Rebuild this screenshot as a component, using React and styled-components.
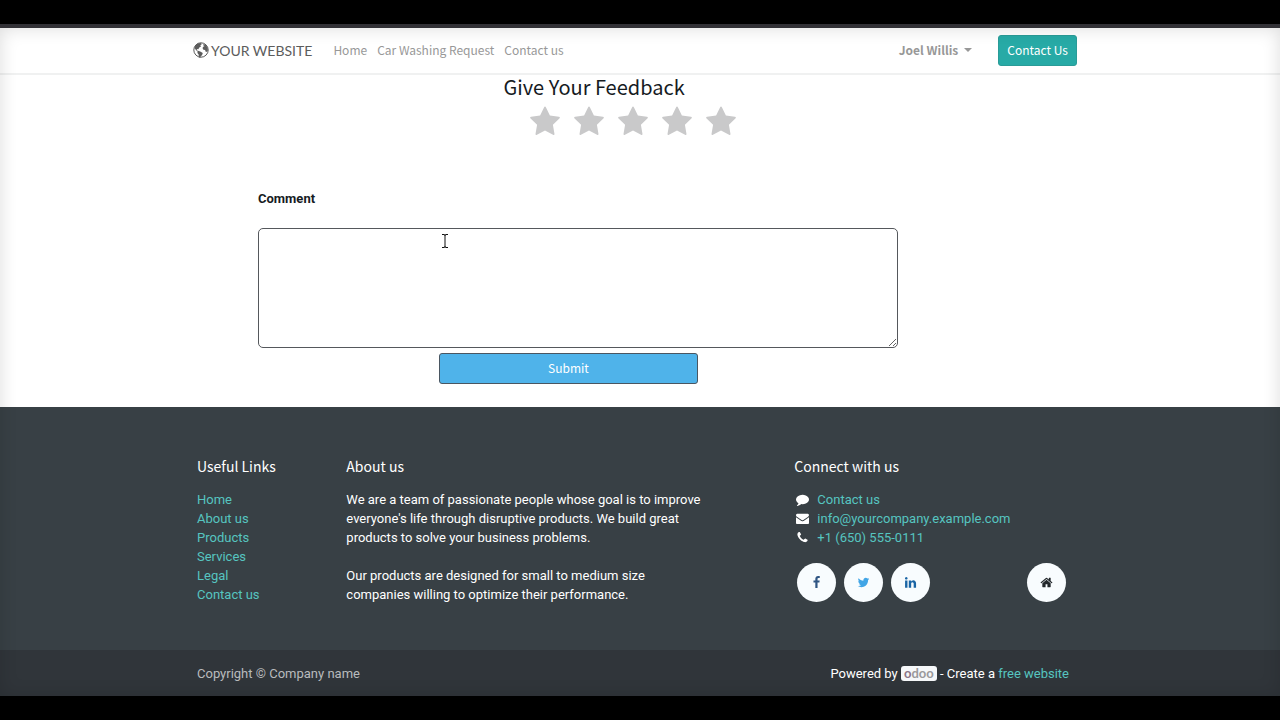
import React from "react";
import styled, { createGlobalStyle, css } from "styled-components";

const COLORS = {
  teal: "#27aaa6",
  link: "#56c5c0",
  slate: "#384045",
  slateDark: "#30353a",
  sky: "#4fb3ea",
  ink: "#161b1f",
  muted: "#989898",
};

const FONTS = {
  body: `Roboto, "Liberation Sans", sans-serif`,
  heading: `"Noto Sans CJK SC", "Open Sans", sans-serif`,
  logo: `Lato, "Open Sans", sans-serif`,
};

const ICONS = {
  star: "M1728 647q0 22-26 48l-363 354 86 500q1 7 1 20 0 21-10.5 35.5t-30.5 14.5q-19 0-40-12l-449-236-449 236q-22 12-40 12-21 0-31.5-14.5t-10.5-35.5q0-6 2-20l86-500-364-354q-25-27-25-48 0-37 56-46l502-73 225-455q19-41 49-41t49 41l225 455 502 73q56 9 56 46z",
  facebook:
    "M1343 12v264h-157q-86 0-116 36t-30 108v189h293l-39 296h-254v759h-306v-759h-255v-296h255v-218q0-186 104-288.5t277-102.5q147 0 228 12z",
  twitter:
    "M1684 408q-67 98-162 167 1 14 1 42 0 130-38 259.5t-115.5 248.5-184.5 210.5-258 146-323 54.5q-271 0-496-145 35 4 78 4 225 0 401-138-105-2-188-64.5t-114-159.5q33 5 61 5 43 0 85-11-112-23-185.5-111.5t-73.5-205.5v-4q68 38 146 41-66-44-105-115t-39-154q0-88 44-163 121 149 294.5 238.5t371.5 99.5q-8-38-8-74 0-134 94.5-228.5t228.5-94.5q140 0 236 102 109-21 205-78-37 115-142 178 93-10 186-50z",
  linkedin:
    "M477 625v991h-330v-991h330zm21-306q1 73-50.5 122t-135.5 49h-2q-82 0-132-49t-50-122q0-74 51.5-122.5t134.5-48.5 133 48.5 51 122.5zm1166 729v568h-329v-530q0-105-40.5-164.5t-126.5-59.5q-63 0-105.5 34.5t-63.5 85.5q-11 30-11 81v553h-329q2-399 2-647t-1-296l-1-48h329v144h-2q20-32 41-56t56.5-52 87-43.5 114.5-15.5q171 0 275 113.5t104 332.5z",
  home: "M1472 992v480q0 26-19 45t-45 19h-384v-384h-256v384h-384q-26 0-45-19t-19-45v-480q0-1 .5-3t.5-3l575-474 575 474q1 2 1 6zm223-69l-62 74q-8 9-21 11h-3q-13 0-21-7l-692-577-692 577q-12 8-24 7-13-2-21-11l-62-74q-8-10-7-23.5t11-21.5l719-599q32-26 76-26t76 26l244 204v-195q0-14 9-23t23-9h192q14 0 23 9t9 23v408l219 182q10 8 11 21.5t-7 23.5z",
  comment:
    "M1792 896q0 174-120 321.5t-326 233-450 85.5q-70 0-145-8-198 175-460 242-49 14-114 22-17 2-30.5-9t-17.5-29v-1q-3-4-.5-12t2-10 4.5-9.5l6-9 7-8.5 8-9q7-8 31-34.5t34.5-38 31-39.5 32.5-51 27-59 26-76q-157-89-247.5-220t-90.5-281q0-130 71-248.5t191-204.5 286-136.5 348-50.5q244 0 450 85.5t326 233 120 321.5z",
  envelope:
    "M1792 710v794q0 66-47 113t-113 47h-1472q-66 0-113-47t-47-113v-794q44 49 101 87 362 246 497 345 57 42 92.5 65.5t94.5 48 110 24.5h2q51 0 110-24.5t94.5-48 92.5-65.5q170-123 498-345 57-39 100-87zm0-294q0 79-49 151t-122 123q-376 261-468 325-10 7-42.5 31t-54 38.8-52 33.2-57.5 27-50 9h-2q-23 0-50-9t-57.5-27-52-33.2-54-38.8-42.5-31q-91-64-262-182.5t-205-142.5q-62-42-117-115.5t-55-136.5q0-78 41.5-130t118.5-52h1472q65 0 112.5 47t47.5 113z",
  phone:
    "M1600 1240q0 27-10 70.5t-21 68.5q-21 50-122 106-94 51-186 51-27 0-53-3.5t-57.5-12.5-47-14.5-55.5-20.5-49-18q-98-35-175-83-127-79-264-216t-216-264q-48-77-83-175-3-9-18-49t-20.5-55.5-14.5-47-12.5-57.5-3.5-53q0-92 51-186 56-101 106-122 25-11 68.5-21t70.5-10q14 0 21 3 18 6 53 76 11 19 30 54t35 63.5 31 53.5q3 4 17.5 25t21.5 35.5 7 28.5q0 20-28.5 50t-62 55-62 53-28.5 46q0 9 5 22.5t8.5 20.5 14 24 11.5 19q76 137 174 235t235 174q2 1 19 11.5t24 14 20.5 8.5 22.5 5q18 0 46-28.5t53-62 55-62 50-28.5q14 0 28.5 7t35.5 21.5 25 17.5q25 15 53.5 31t63.5 35 54 30q70 35 76 53 3 7 3 21z",
};

const USEFUL_LINKS = [
  "Home",
  "About us",
  "Products",
  "Services",
  "Legal",
  "Contact us",
];

const CONTACTS = [
  { icon: "comment", label: "Contact us" },
  { icon: "envelope", label: "info@yourcompany.example.com" },
  { icon: "phone", label: "+1 (650) 555-0111" },
];

const SOCIALS = [
  { icon: "facebook", label: "Facebook", color: "#2f5583" },
  { icon: "twitter", label: "Twitter", color: "#41a5e6" },
  { icon: "linkedin", label: "LinkedIn", color: "#1a65a5" },
];

const Glyph = ({ name, size }) => (
  <svg width={size} height={size} viewBox="0 0 1792 1792" aria-hidden="true">
    <path d={ICONS[name]} fill="currentColor" />
  </svg>
);

const Globe = () => (
  <svg width="16" height="16" viewBox="0 0 16 16" aria-hidden="true">
    <circle cx="8" cy="8" r="7.2" fill="none" stroke="currentColor" />
    <path
      d="M2.200 4 4.600 1.600 8 1l.8 1.200-1.600 1 1 1-1.900 1.400-1 1.700-1.500-.3.3 1.500 1.600.6 1.500.5 2.600 1.400-.7 2-1.500 1.600-.4 1.300-1.400-.6-.2-2.900-1.200-1.500.2-1.300L2.900 8 1.500 6z"
      fill="currentColor"
    />
    <path
      d="M10.400 2 12.600 2.800 14.600 5.600l.3 3-1.300 1.500-1.100-.6-.4-1.600-1.700-.2-.9-1.600 1-1.500 1.200-.6-1.400-.5z"
      fill="currentColor"
    />
  </svg>
);

const SiteHeader = () => (
  <Header>
    <HeaderInner>
      <Logo href="#">
        <Globe />
        YOUR WEBSITE
      </Logo>
      <Nav>
        <NavLink href="#">Home</NavLink>
        <NavLink href="#">Car Washing Request</NavLink>
        <NavLink href="#">Contact us</NavLink>
      </Nav>
      <UserMenu type="button" aria-haspopup="true">
        Joel Willis
        <Caret />
      </UserMenu>
      <ContactButton type="button">Contact Us</ContactButton>
    </HeaderInner>
  </Header>
);

const FeedbackForm = () => (
  <Form onSubmit={(event) => event.preventDefault()}>
    <Rating>
      <RatingTitle>Give Your Feedback</RatingTitle>
      <Stars>
        {[1, 2, 3, 4, 5].map((value) => (
          <Star key={value}>
            <input
              type="radio"
              name="rating"
              value={value}
              aria-label={`${value} stars`}
            />
            <Glyph name="star" size={32} />
          </Star>
        ))}
      </Stars>
    </Rating>
    <CommentField>
      <CommentLabel htmlFor="comment">Comment</CommentLabel>
      <CommentBox>
        <Textarea id="comment" />
        <Pointer width="8" height="16" viewBox="0 0 8 16" aria-hidden="true">
          <path
            d="M1 1.500h2q1 0 1 1 0-1 1-1h2M4 2v12M1 14.500h2q1 0 1-1 0 1 1 1h2"
            fill="none"
            stroke="#111"
          />
        </Pointer>
      </CommentBox>
      <Submit type="submit">Submit</Submit>
    </CommentField>
  </Form>
);

const SiteFooter = () => (
  <Footer>
    <FooterGrid>
      <Column $span={2}>
        <ColumnTitle>Useful Links</ColumnTitle>
        <List>
          {USEFUL_LINKS.map((label) => (
            <li key={label}>
              <Link href="#">{label}</Link>
            </li>
          ))}
        </List>
      </Column>
      <Column $span={5}>
        <ColumnTitle>About us</ColumnTitle>
        <Paragraph>
          We are a team of passionate people whose goal is to improve everyone's
          life through disruptive products. We build great products to solve
          your business problems.
        </Paragraph>
        <Paragraph>
          Our products are designed for small to medium size companies willing
          to optimize their performance.
        </Paragraph>
      </Column>
      <Column $start={9} $span={4}>
        <ColumnTitle>Connect with us</ColumnTitle>
        <List>
          {CONTACTS.map(({ icon, label }) => (
            <Contact key={label}>
              <Glyph name={icon} size={13} />
              <Link href="#">{label}</Link>
            </Contact>
          ))}
        </List>
        <Socials>
          {SOCIALS.map(({ icon, label, color }) => (
            <Round key={label} href="#" aria-label={label} $color={color}>
              <Glyph name={icon} size={13} />
            </Round>
          ))}
          <Round href="#" aria-label="Home page" $color="#22272b" $end>
            <Glyph name="home" size={13} />
          </Round>
        </Socials>
      </Column>
    </FooterGrid>
  </Footer>
);

const BottomBar = () => (
  <Bottom>
    <BottomInner>
      <Copyright>Copyright © Company name</Copyright>
      <span>
        Powered by{" "}
        <Badge>
          <i>o</i>doo
        </Badge>{" "}
        - Create a <Link href="#">free website</Link>
      </span>
    </BottomInner>
  </Bottom>
);

const App = () => (
  <>
    <GlobalStyle />
    <Page>
      <SiteHeader />
      <FeedbackForm />
      <SiteFooter />
      <BottomBar />
    </Page>
  </>
);

const GlobalStyle = createGlobalStyle`
  *,
  *::before,
  *::after {
    box-sizing: border-box;
  }

  body {
    margin: 0;
    padding: 24px 0;
    background: #000;
    color: ${COLORS.ink};
    font-family: ${FONTS.body};
    font-size: 13px;
    line-height: 19px;
  }
`;

const Page = styled.div`
  position: relative;
  border-top: 4px solid #323136;
  background: #fff;

  &::after {
    content: "";
    position: absolute;
    inset: 0;
    box-shadow: inset 0 0 18px rgba(0, 0, 0, 0.14);
    pointer-events: none;
  }
`;

const container = css`
  width: 100%;
  max-width: 896px;
  margin: 0 auto;
`;

const buttonBase = css`
  height: 31px;
  padding: 0 8px 2px;
  border-radius: 3px;
  color: #fff;
  font-family: ${FONTS.heading};
  font-size: 12px;
`;

const Header = styled.header`
  padding-right: 10px;
  border-bottom: 2px solid #f0f1f1;
`;

const HeaderInner = styled.div`
  ${container}
  max-width: 884px;
  height: 45px;
  display: flex;
  align-items: center;
`;

const Logo = styled.a`
  display: flex;
  align-items: center;
  gap: 2px;
  margin-right: 16px;
  padding-bottom: 1px;
  color: #5c5c5c;
  font-family: ${FONTS.logo};
  font-size: 14px;
  text-decoration: none;
`;

const Nav = styled.nav`
  display: flex;
  padding-bottom: 2px;
`;

const NavLink = styled.a`
  padding: 0 5px;
  color: ${COLORS.muted};
  font-family: ${FONTS.heading};
  font-size: 12px;
  text-decoration: none;
`;

const UserMenu = styled.button`
  display: flex;
  align-items: center;
  gap: 6px;
  margin: 0 26px 0 auto;
  padding: 0 0 2px;
  border: 0;
  background: none;
  color: ${COLORS.muted};
  font-family: ${FONTS.heading};
  font-size: 12px;
  font-weight: 700;
`;

const Caret = styled.span`
  border: 4px solid transparent;
  border-top-color: currentColor;
  border-bottom: 0;
`;

const ContactButton = styled.button`
  ${buttonBase}
  border: 1px solid #2a9c98;
  background: ${COLORS.teal};
`;

const Form = styled.form`
  padding: 0 14px 23px 0;
`;

const Rating = styled.fieldset`
  width: 259px;
  margin: 0 auto;
  padding: 0;
  border: 0;
`;

const RatingTitle = styled.legend`
  padding: 0;
  font-family: ${FONTS.heading};
  font-size: 20px;
  line-height: 24px;
`;

const Stars = styled.div`
  display: flex;
  justify-content: center;
  gap: 12px;
  padding-top: 7px;
`;

const Star = styled.label`
  display: flex;
  color: #c9c9ca;

  input {
    position: absolute;
    opacity: 0;
  }
`;

const CommentField = styled.div`
  ${container}
  padding: 51px 0 0 73px;
`;

const CommentLabel = styled.label`
  display: block;
  font-weight: 700;
`;

const CommentBox = styled.div`
  position: relative;
  max-width: 640px;
  margin-top: 20px;
`;

const Textarea = styled.textarea`
  display: block;
  width: 100%;
  height: 120px;
  padding: 6px 10px;
  border: 1px solid #55585c;
  border-radius: 5px;
  background: #fff;
  font: inherit;
  resize: vertical;
`;

// text cursor resting over the comment box
const Pointer = styled.svg`
  position: absolute;
  left: 183px;
  top: 5px;
  pointer-events: none;
`;

const Submit = styled.button`
  ${buttonBase}
  display: block;
  width: 259px;
  margin: 5px 0 0 181px;
  border: 1px solid #4a5661;
  background: ${COLORS.sky};
`;

const Footer = styled.footer`
  padding: 47px 14px 27px 0;
  background: ${COLORS.slate};
  color: #fff;
`;

const FooterGrid = styled.div`
  ${container}
  display: grid;
  grid-template-columns: repeat(12, 1fr);
`;

const Column = styled.section`
  grid-column: ${({ $start = "auto", $span }) => `${$start} / span ${$span}`};
  padding-left: 12px;
`;

const ColumnTitle = styled.h2`
  margin: 0 0 11px;
  font-family: ${FONTS.heading};
  font-size: 14px;
  font-weight: 400;
  line-height: 25px;
`;

const List = styled.ul`
  margin: 0;
  padding: 0;
  list-style: none;
`;

const Link = styled.a`
  color: ${COLORS.link};
  text-decoration: none;
`;

const Paragraph = styled.p`
  margin: 0 0 19px;
`;

const Contact = styled.li`
  display: flex;
  align-items: center;
  gap: 8px;
  padding-left: 2px;
`;

const Socials = styled.div`
  display: flex;
  gap: 8px;
  padding: 16px 15px 0 3px;
`;

const Round = styled.a`
  display: flex;
  align-items: center;
  justify-content: center;
  width: 39px;
  height: 39px;
  margin-left: ${({ $end }) => ($end ? "auto" : 0)};
  border-radius: 50%;
  background: #f8fcfe;
  color: ${({ $color }) => $color};
`;

const Bottom = styled.div`
  padding: 14px 14px 13px 0;
  background: ${COLORS.slateDark};
  color: #fff;
`;

const BottomInner = styled.div`
  ${container}
  display: flex;
  justify-content: space-between;
  padding: 0 12px;
`;

const Copyright = styled.span`
  color: #b9bbbd;
`;

const Badge = styled.span`
  display: inline-block;
  padding: 0 3px;
  border-radius: 3px;
  background: #f6f8fa;
  color: #9a9a9c;
  font-family: ${FONTS.logo};
  font-size: 13px;
  font-weight: 700;
  line-height: 15px;

  i {
    color: #8d7688;
    font-style: normal;
  }
`;

export default App;
